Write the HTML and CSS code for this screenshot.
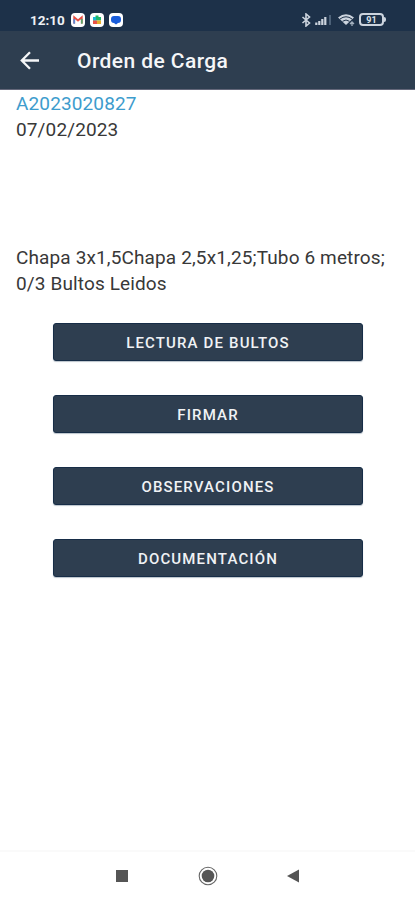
FILE: index.html
```html
<!DOCTYPE html>
<html lang="es">
<head>
<meta charset="utf-8">
<title>Orden de Carga</title>
<link rel="stylesheet" href="styles.css">
</head>
<body>
<div class="screen">
  <div class="status">
    <span class="clock">12:10</span>
    <div class="notifications">
      <svg width="14" height="14" viewBox="0 0 14 14"><rect width="14" height="14" rx="4" fill="#fff"/><path d="M3.2 10.5V4.2L7 7.5l3.8-3.3v6.3" fill="none" stroke="#e65045" stroke-width="1.8"/><path d="M3.2 10.7V6" stroke="#5a8bd8" stroke-width="1.8"/><path d="M10.8 10.7V6" stroke="#58a66b" stroke-width="1.8"/></svg>
      <svg width="14" height="14" viewBox="0 0 14 14"><rect width="14" height="14" rx="4" fill="#fff"/><path d="M3 4h2.5V2.5h3V4H11v3.5H3z" fill="#20b66b"/><path d="M3 4h3v3.5H3z" fill="#19b9d2"/><path d="M7 7.5h4V11H7z" fill="#e7ae2c"/><path d="M3 7.5h4V11H3z" fill="#e95348"/></svg>
      <svg width="14" height="14" viewBox="0 0 14 14"><rect width="14" height="14" rx="4" fill="#fff"/><path d="M5 3h4a3 3 0 0 1 3 3v1a3 3 0 0 1-3 3L7 11.5 5 10a3 3 0 0 1-3-3V6a3 3 0 0 1 3-3z" fill="#195ddb"/></svg>
    </div>
    <div class="indicators">
      <svg width="10" height="14" viewBox="0 0 10 14"><path d="M1.5 4l7 6L5 13V1l3.5 3-7 6" fill="none" stroke="#ccd4de" stroke-width="1.6"/></svg>
      <svg width="17" height="12" viewBox="0 0 17 12"><path d="M1.3 8.5V11M4.3 7v4M7.3 5v6M10.3 3v8" stroke="#ccd4de" stroke-width="2.2"/><path d="M15 1v10" stroke="#52677e" stroke-width="1.8"/></svg>
      <svg class="wifi" width="18" height="14" viewBox="0 0 18 14"><path d="M1 4.5Q9-2 17 4.5L9 12z" fill="#ccd4de"/><path d="M3 6Q9 1.5 15 6M5.5 8.3Q9 5.7 12.5 8.3" fill="none" stroke="#1d3149"/><path d="M13 11l2-2 2 2M15 9v4" fill="none" stroke="#a2afbe" stroke-width="1.3"/></svg>
      <div class="battery"><span>91</span></div>
    </div>
  </div>
  <header class="bar">
    <svg width="20" height="20" viewBox="0 0 20 20"><path d="M19 9.5H2.5M10 1.3L1.8 9.5l8.2 8.2" fill="none" stroke="#f5f6f8" stroke-width="2.3"/></svg>
    <h1>Orden de Carga</h1>
  </header>
  <main>
    <div class="order">A2023020827</div>
    <div class="date">07/02/2023</div>
    <div class="goods">Chapa 3x1,5Chapa 2,5x1,25;Tubo 6 metros;</div>
    <div class="count">0/3 Bultos Leidos</div>
    <div class="actions">
      <button>LECTURA DE BULTOS</button>
      <button>FIRMAR</button>
      <button>OBSERVACIONES</button>
      <button>DOCUMENTACIÓN</button>
    </div>
  </main>
  <nav>
    <svg width="20" height="20" viewBox="0 0 20 20"><path d="M4 4h12v12H4z" fill="#555"/></svg>
    <svg width="20" height="20" viewBox="0 0 20 20"><circle cx="10" cy="10" r="8.8" fill="#fff" stroke="#666" stroke-width="1.1"/><circle cx="10" cy="10" r="6.3" fill="#555"/></svg>
    <svg width="20" height="20" viewBox="0 0 20 20"><path d="M4 10l12-6.5v13z" fill="#555"/></svg>
  </nav>
</div>
</body>
</html>
```
FILE: styles.css
```css
* { box-sizing: border-box; }
body { margin: 0; background: #fff; font-family: Roboto, sans-serif; }
.screen { width: 415px; height: 900px; display: flex; flex-direction: column; overflow: hidden; }
.status { height: 31px; flex: none; padding: 8px 28px 0 30px; display: flex; align-items: center; background: #1d3149; color: #eef1f5; }
.clock { width: 41px; font-size: 13.5px; font-weight: 700; line-height: 16px; }
.notifications { display: flex; gap: 5px; }
.indicators { margin-left: auto; display: flex; align-items: center; }
.indicators svg { margin-right: 4px; }
.indicators .wifi { margin: 0 4px 0 1px; }
.battery { position: relative; width: 25px; height: 13px; margin-right: 3px; border: 2px solid #ccd4de; border-radius: 4px; display: flex; align-items: center; justify-content: center; color: #dce2e9; font-size: 9px; font-weight: 700; }
.battery::after { content: ""; position: absolute; right: -4px; top: 2px; width: 2px; height: 5px; background: #ccd4de; border-radius: 0 2px 2px 0; }
.bar { height: 59px; flex: none; padding: 2px 20px 0; display: flex; align-items: center; gap: 37px; background: #2e3e50; border-bottom: 1px solid #64677a; }
h1 { margin: 0; color: #f5f6f8; font-size: 21px; font-weight: 500; letter-spacing: .42px; line-height: 28px; }
main { flex: 1; padding: 1px 16px 0; color: #383838; font-size: 19px; line-height: 26px; letter-spacing: .13px; white-space: nowrap; }
.order { color: #3d9ccd; }
.goods { margin-top: 102px; }
.actions { display: grid; gap: 34px; width: 310px; margin: 26px 0 0 37px; }
button { height: 38px; padding: 1px 0 0; border: 1px solid #172d47; border-radius: 3px; background: #2e3e50; color: #f0f2f5; font: 500 15px/20px Roboto, sans-serif; letter-spacing: 1.15px; box-shadow: 0 1px 1px #bac2ca; }
nav { height: 50px; flex: none; padding: 0 112px; border-top: 2px solid #fafafa; display: flex; align-items: center; justify-content: space-between; }
```
